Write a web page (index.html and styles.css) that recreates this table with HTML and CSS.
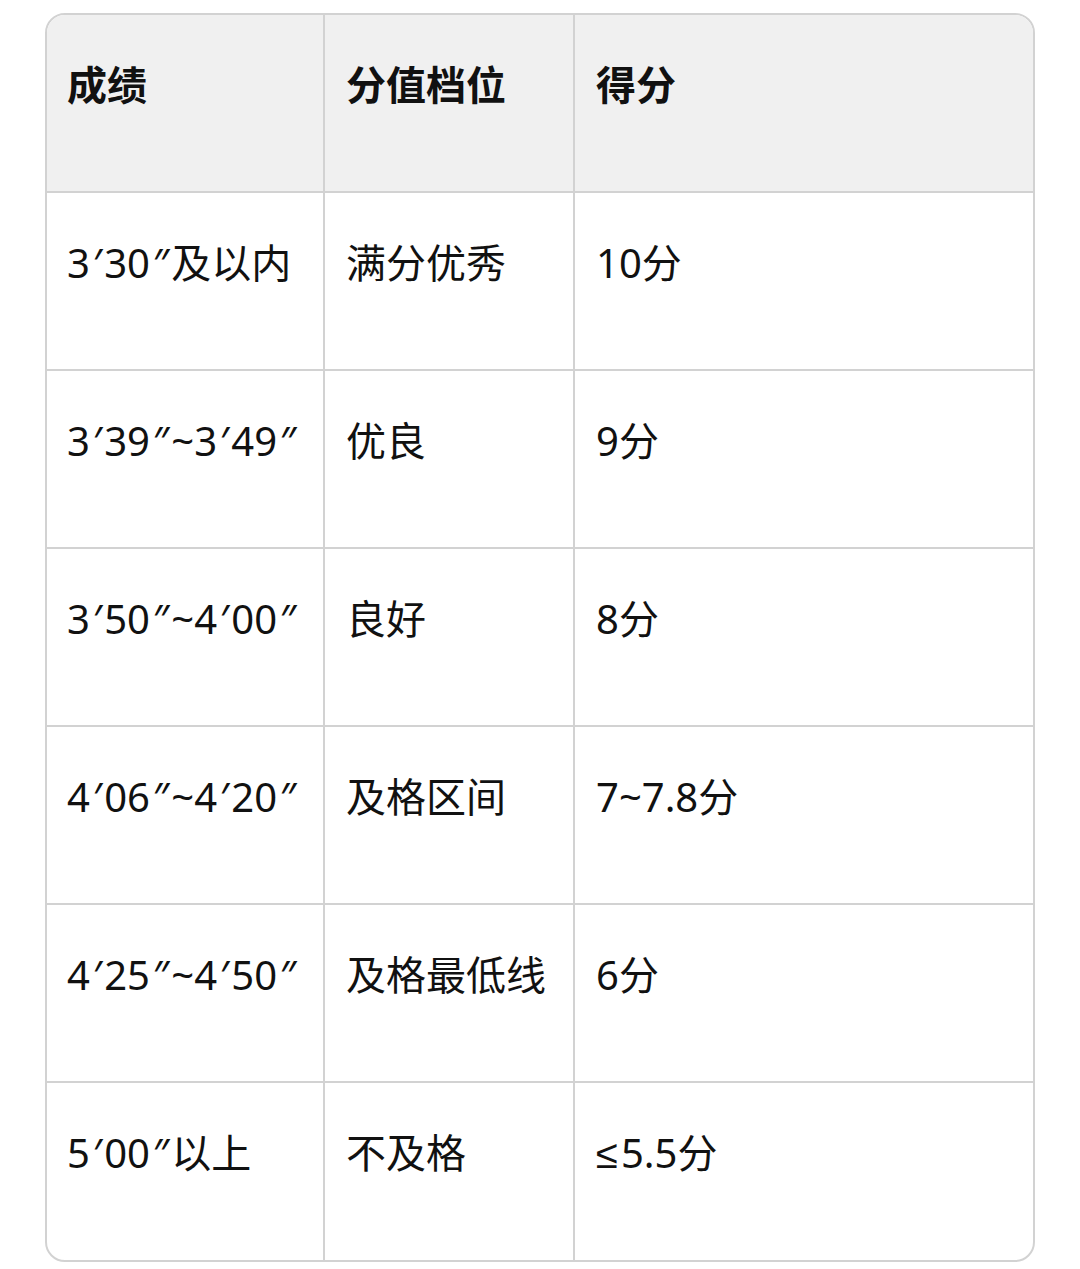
FILE: index.html
```html
<!DOCTYPE html>
<html lang="zh-CN">
<head>
<meta charset="utf-8">
<link rel="stylesheet" href="styles.css">
</head>
<body>
<div class="table">
  <div class="cell head first">成绩</div>
  <div class="cell head">分值档位</div>
  <div class="cell head last">得分</div>

  <div class="cell first">3<span class="pr">′</span>30<span class="pr">″</span>及以内</div>
  <div class="cell">满分优秀</div>
  <div class="cell last">10分</div>

  <div class="cell first">3<span class="pr">′</span>39<span class="pr">″</span>~3<span class="pr">′</span>49<span class="pr">″</span></div>
  <div class="cell">优良</div>
  <div class="cell last">9分</div>

  <div class="cell first">3<span class="pr">′</span>50<span class="pr">″</span>~4<span class="pr">′</span>00<span class="pr">″</span></div>
  <div class="cell">良好</div>
  <div class="cell last">8分</div>

  <div class="cell first">4<span class="pr">′</span>06<span class="pr">″</span>~4<span class="pr">′</span>20<span class="pr">″</span></div>
  <div class="cell">及格区间</div>
  <div class="cell last">7~7.8分</div>

  <div class="cell first">4<span class="pr">′</span>25<span class="pr">″</span>~4<span class="pr">′</span>50<span class="pr">″</span></div>
  <div class="cell">及格最低线</div>
  <div class="cell last">6分</div>

  <div class="cell bottom first">5<span class="pr">′</span>00<span class="pr">″</span>以上</div>
  <div class="cell bottom">不及格</div>
  <div class="cell bottom last"><span class="le">≤</span>5.5分</div>
</div>
</body>
</html>
```

FILE: styles.css
```css
html, body {
  margin: 0;
  padding: 0;
  background: #ffffff;
}
body {
  padding: 13px 0 0 45px;
  font-family: "Noto Sans", "Noto Sans CJK SC", sans-serif;
  color: #111111;
}
.table {
  width: 986px;
  border: 2px solid #d2d2d2;
  border-radius: 20px;
  overflow: hidden;
  display: grid;
  grid-template-columns: 278px 250px 1fr;
}
.cell {
  height: 133px;
  padding: 43px 20px 0 21px;
  border-right: 2px solid #d2d2d2;
  border-bottom: 2px solid #d2d2d2;
  font-size: 40px;
  line-height: 54px;
  white-space: nowrap;
}
.pr {
  padding: 0 2px 0 3px;
}
.le {
  font-family: "Liberation Sans", sans-serif;
  padding-right: 3px;
}
.cell.first {
  padding-left: 20px;
}
.cell.last {
  border-right: none;
}
.cell.bottom {
  border-bottom: none;
  height: 134px;
}
.cell.head {
  background: #f0f0f0;
  font-weight: 700;
}
```
